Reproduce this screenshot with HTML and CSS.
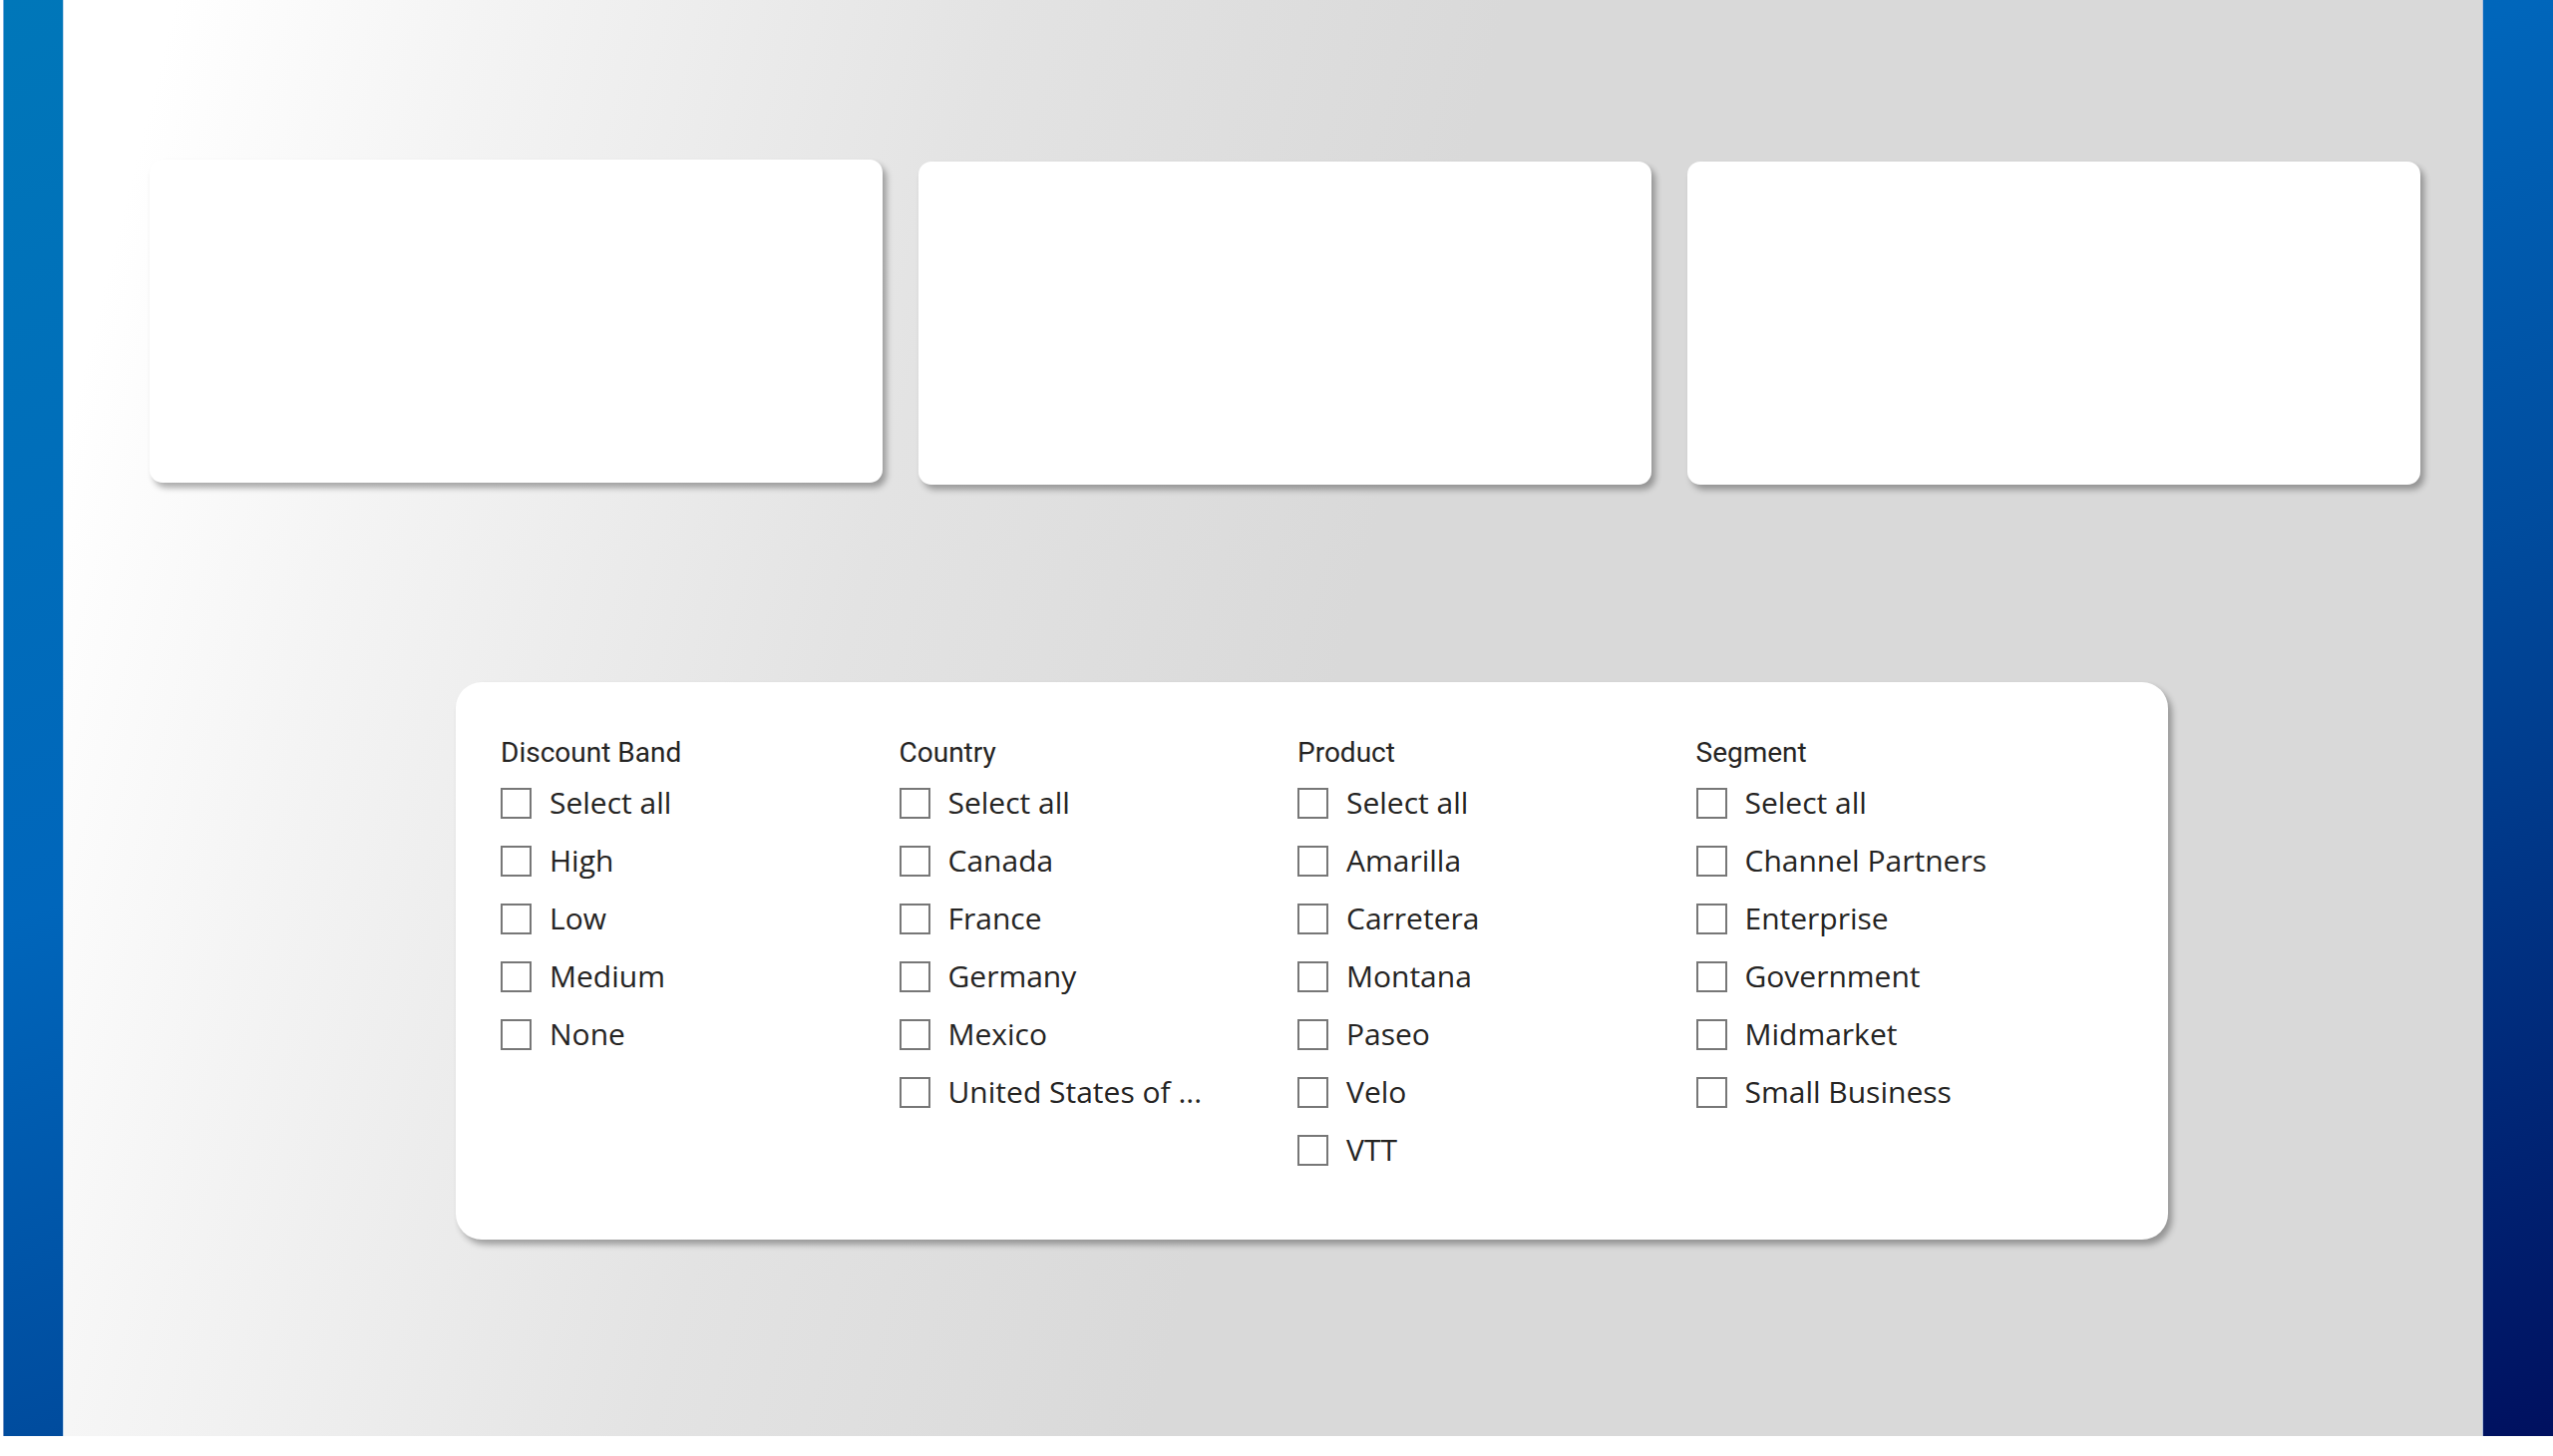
FILE: index.html
```
<!doctype html>
<html>
<head>
<meta charset="utf-8">
<title>Sales report</title>
<link rel="stylesheet" href="styles.css">
</head>
<body>
<div class="canvas">
	<div class="board">
		<div class="cards">
			<div class="card"></div>
			<div class="card"></div>
			<div class="card"></div>
		</div>
		<div class="slicer">
			<div class="field">
				<h3>Discount Band</h3>
				<ul>
					<li><span class="box"></span>Select all</li>
					<li><span class="box"></span>High</li>
					<li><span class="box"></span>Low</li>
					<li><span class="box"></span>Medium</li>
					<li><span class="box"></span>None</li>
				</ul>
			</div>
			<div class="field">
				<h3>Country</h3>
				<ul>
					<li><span class="box"></span>Select all</li>
					<li><span class="box"></span>Canada</li>
					<li><span class="box"></span>France</li>
					<li><span class="box"></span>Germany</li>
					<li><span class="box"></span>Mexico</li>
					<li><span class="box"></span>United States of ...</li>
				</ul>
			</div>
			<div class="field">
				<h3>Product</h3>
				<ul>
					<li><span class="box"></span>Select all</li>
					<li><span class="box"></span>Amarilla</li>
					<li><span class="box"></span>Carretera</li>
					<li><span class="box"></span>Montana</li>
					<li><span class="box"></span>Paseo</li>
					<li><span class="box"></span>Velo</li>
					<li><span class="box"></span>VTT</li>
				</ul>
			</div>
			<div class="field">
				<h3>Segment</h3>
				<ul>
					<li><span class="box"></span>Select all</li>
					<li><span class="box"></span>Channel Partners</li>
					<li><span class="box"></span>Enterprise</li>
					<li><span class="box"></span>Government</li>
					<li><span class="box"></span>Midmarket</li>
					<li><span class="box"></span>Small Business</li>
				</ul>
			</div>
		</div>
	</div>
</div>
</body>
</html>
```

FILE: styles.css
```
*{margin:0; padding:0; list-style:none; box-sizing:border-box;}
body{background:#fff; font-family:"Open Sans", "Noto Sans", sans-serif; color:#252423;}

.canvas{width:2557px; height:1440px; margin-left:3px; display:flex;
	background:linear-gradient(160deg, #0077b9 0%, #0066bb 39%, #004c9e 61%, #00105f 100%);
	border-left:1px solid rgba(160,200,235,0.7);}
.board{width:2427px; height:1440px; margin-left:59px;
	border-left:1px solid rgba(190,215,240,0.9); border-right:1px solid rgba(170,185,215,0.9);
	background:linear-gradient(104deg, #fff 4%, #f4f4f4 15%, #e3e3e3 34%, #d9d9d9 52%);
	padding-top:160px;}

.cards{display:flex; gap:36px; margin-left:86px;}
.card{width:735px; height:324px; margin-top:2px; background:#fff; border-radius:13px; box-shadow:4px 5px 6px rgba(0,0,0,0.32);}
.card:first-child{margin-top:0;}

.slicer{width:1717px; height:559px; margin:198px 0 0 393px; padding:54px 0 0 45px;
	background:#fff; border-radius:26px; box-shadow:4px 5px 6px rgba(0,0,0,0.32);
	display:grid; grid-template-columns:repeat(4, 399.5px); align-items:start;}
.field h3{font-family:Roboto, "Liberation Sans", sans-serif; font-weight:400; font-size:28px; line-height:34px; height:34px; margin-bottom:4px; color:#252423;}
.field li{display:flex; align-items:center; height:58px; font-size:30px; line-height:58px; white-space:nowrap;}
.box{width:31px; height:31px; border:2px solid #777; margin-right:18px; flex-shrink:0;}
```
